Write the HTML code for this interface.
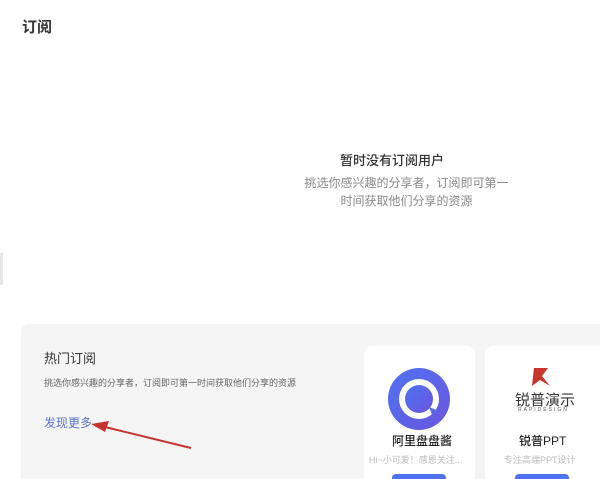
<!DOCTYPE html>
<html><head><meta charset="utf-8"><style>
*{margin:0;padding:0;box-sizing:border-box}
html,body{width:600px;height:479px;overflow:hidden}
body{background:#fff;font-family:"Liberation Sans","Noto Sans CJK SC",sans-serif;position:relative;color:#333}
.a{position:absolute;white-space:nowrap}
</style></head><body>
<div class="a" style="left:22px;top:16px;font-size:15px;font-weight:bold;color:#333">订阅</div>
<div class="a" style="left:0;top:253px;width:3px;height:32px;background:#e6e6e6"></div>
<div class="a" style="left:340px;top:150px;font-size:13px;color:#333;font-weight:500">暂时没有订阅用户</div>
<div class="a" style="left:304px;top:174px;font-size:12px;color:#888;line-height:18px;text-align:center;width:205px;white-space:normal">挑选你感兴趣的分享者，订阅即可第一时间获取他们分享的资源</div>
<div class="a" style="left:21px;top:324px;width:600px;height:170px;background:#f5f5f6;border-radius:8px"></div>
<div class="a" style="left:44px;top:348px;font-size:13px;color:#333">热门订阅</div>
<div class="a" style="left:44px;top:376px;font-size:9px;color:#666">挑选你感兴趣的分享者，订阅即可第一时间获取他们分享的资源</div>
<div class="a" style="left:44px;top:414px;font-size:12px;color:#5b74c9">发现更多</div>
<svg class="a" style="left:85px;top:415px" width="115" height="40"><line x1="106" y1="33" x2="20" y2="12" stroke="#c8332b" stroke-width="2"/><polygon points="6,9 24,6 20,17" fill="#c8332b"/></svg>
<div class="a" style="left:364px;top:346px;width:111px;height:140px;background:#fff;border-radius:8px"></div>
<div class="a" style="left:485px;top:346px;width:120px;height:140px;background:#fff;border-radius:8px"></div>
<svg class="a" style="left:387px;top:367px" width="64" height="64"><defs><linearGradient id="g" x1="0" y1="0" x2="1" y2="1"><stop offset="0" stop-color="#4f73f0"/><stop offset="1" stop-color="#6a55e0"/></linearGradient></defs><circle cx="32" cy="32" r="31" fill="url(#g)"/><circle cx="32" cy="32" r="20" fill="#fff"/><circle cx="32" cy="32" r="14" fill="url(#g)"/><path d="M42 40 L52 44 L46 50 Z" fill="url(#g)"/></svg>
<div class="a" style="left:392px;top:432px;font-size:12px;color:#222;font-weight:500">阿里盘盘酱</div>
<div class="a" style="left:369px;top:453px;font-size:9px;color:#bbb">Hi~小可爱！感恩关注...</div>
<div class="a" style="left:392px;top:474px;width:54px;height:10px;background:#4f73f0;border-radius:4px"></div>
<svg class="a" style="left:530px;top:366px" width="22" height="22"><polygon points="4,2 18,2 12,10 20,20 10,14 2,20" fill="#c8332b"/></svg>
<div class="a" style="left:515px;top:389px;font-size:15px;color:#333">锐普演示</div>
<div class="a" style="left:518px;top:407px;font-size:5px;color:#555;letter-spacing:2px">RAPIDESIGN</div>
<div class="a" style="left:519px;top:432px;font-size:12px;color:#222;font-weight:500">锐普PPT</div>
<div class="a" style="left:504px;top:453px;font-size:9px;color:#bbb">专注高端PPT设计</div>
<div class="a" style="left:515px;top:474px;width:54px;height:10px;background:#4f73f0;border-radius:4px"></div>
</body></html>
